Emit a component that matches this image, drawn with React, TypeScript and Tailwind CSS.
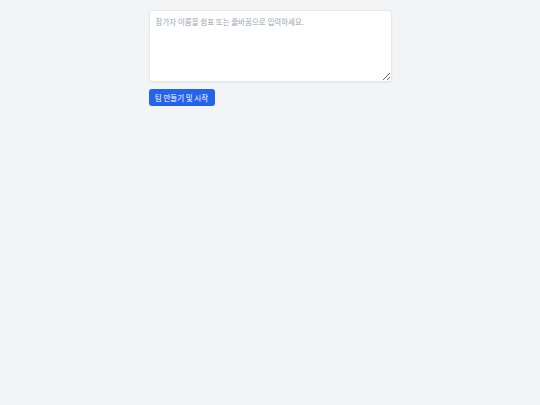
export default function App() {
  return (
    <div className="min-h-[405px] bg-[#f3f4f6] pt-[10px] font-['Noto_Sans_CJK_KR','Noto_Sans',sans-serif]">
      <div className="mx-auto w-[243px]">
        <textarea
          placeholder="참가자 이름을 쉼표 또는 줄바꿈으로 입력하세요."
          className="block h-[72px] w-full rounded-[3px] border border-[#e5e7eb] bg-white px-[6px] py-[6px] text-[7.5px] leading-[10px] text-[#374151] shadow-[0_1px_2px_rgba(0,0,0,0.06)] outline-none placeholder:text-[#9ca3af]"
        />
        <button className="mt-[7px] flex h-[17px] w-[66px] items-center justify-center rounded-[3px] bg-[#2563eb] text-[7.5px] leading-none text-white">
          팀 만들기 및 시작
        </button>
      </div>
    </div>
  );
}
